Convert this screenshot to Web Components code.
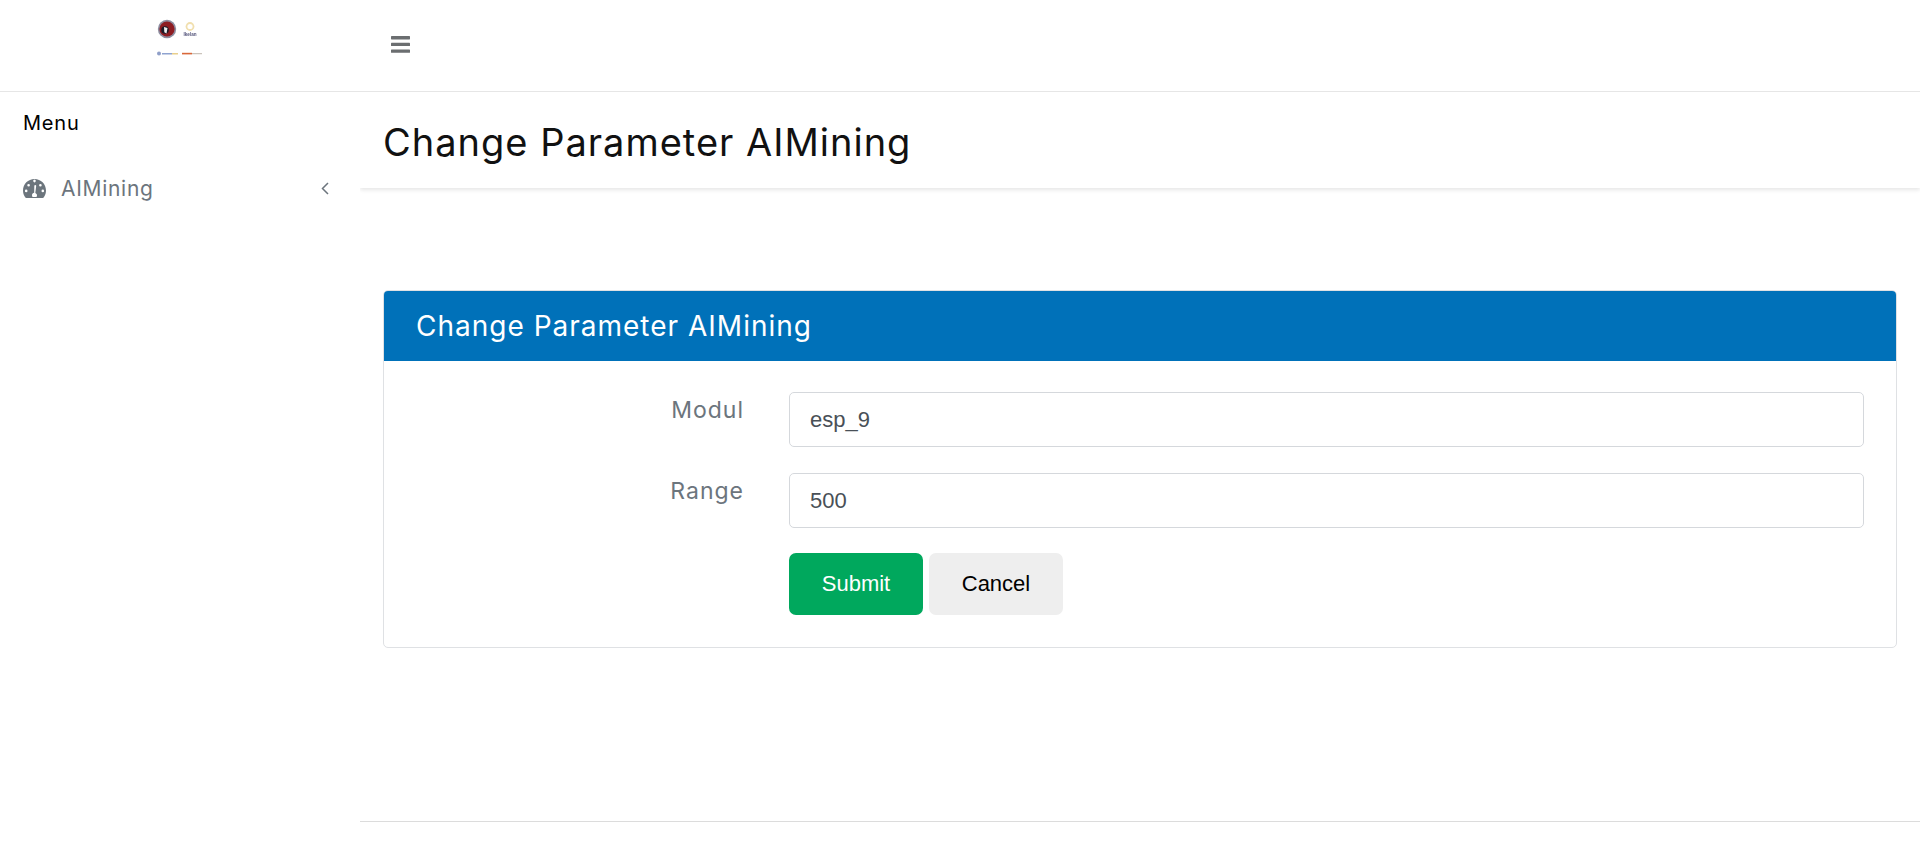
<!DOCTYPE html>
<html><head><meta charset="utf-8"><style>
html,body{margin:0;height:100%;background:#fff;overflow:hidden}
body{font-family:"Inter","Liberation Sans",sans-serif}
</style></head><body>
<app-shell>
  <top-bar slot="top"></top-bar>
  <side-menu slot="side"></side-menu>
  <page-title slot="main">Change Parameter AIMining</page-title>
  <form-card slot="main" heading="Change Parameter AIMining"></form-card>
  <page-foot slot="main"></page-foot>
</app-shell>
<script>
function def(name, html){
  customElements.define(name, class extends HTMLElement{
    connectedCallback(){
      if(this.shadowRoot) return;
      const r=this.attachShadow({mode:'open'});
      r.innerHTML = typeof html==='function'?html(this):html;
    }
  });
}
const POP='"Inter","Liberation Sans",sans-serif';
def('app-shell',`<style>
:host{display:block;height:846px}
.g{display:grid;grid-template-columns:360px 1fr;grid-template-rows:92px 1fr;height:846px}
.t{grid-column:1/3}
.m{display:flex;flex-direction:column;min-width:0}
</style><div class="g"><div class="t"><slot name="top"></slot></div><div><slot name="side"></slot></div><div class="m"><slot name="main"></slot></div></div>`);

def('top-bar',`<style>
:host{display:flex;height:92px;box-sizing:border-box;border-bottom:1px solid #e6e6e6;align-items:flex-start}
.logo{width:360px;box-sizing:border-box;padding:19px 0 0 155px}
.logo svg{display:block}
.b{margin:36px 0 0 31px;display:block}
text{font:700 4.6px "Liberation Sans",sans-serif;fill:#54547a}
</style><div class="logo"><svg width="50" height="40" viewBox="0 0 50 40" style="filter:blur(.3px)">
<circle cx="12" cy="10" r="9.2" fill="#8d8da0"/><circle cx="12" cy="10" r="7.6" fill="#8e1c22"/>
<circle cx="10" cy="11" r="3.800" fill="#1a1a28"/><path d="M9 8l3.500 1-1 5.500-2.200-1.200z" fill="#eee"/>
<circle cx="35" cy="7.500" r="4.400" fill="#f1dfae"/><circle cx="35" cy="7.500" r="2.600" fill="#fff"/>
<text x="35" y="16.500" text-anchor="middle">Ikelan</text>
<circle cx="4" cy="34.500" r="2" fill="#8f9fc8"/><rect x="7" y="34" width="10" height="1.500" fill="#8fa3d0"/><rect x="17" y="34" width="6" height="1.500" fill="#e9cf8c"/>
<rect x="27" y="33.800" width="10" height="1.600" fill="#d9683a"/><rect x="37" y="34.200" width="10" height="1" fill="#bfb6ac"/>
</svg></div>
<svg class="b" width="19" height="17" viewBox="0 0 19 17"><g fill="#6b6e70"><rect x="0" y="0" width="19" height="3.400" rx=".6"/><rect x="0" y="6.700" width="19" height="3.400" rx=".6"/><rect x="0" y="13.400" width="19" height="3.400" rx=".6"/></g></svg>`);

def('side-menu',`<style>
:host{display:block;font-family:${POP}}
.h{color:#000;font-size:20px;padding:19px 23px 0;line-height:24px;height:24px;letter-spacing:.8px}
.i{display:flex;align-items:center;margin-top:41px;padding:0 31px 0 23px;height:24px;color:#6c757d;font-size:21px;letter-spacing:.7px}
svg{display:block}
.n{margin-left:15px;flex:1}
</style><div class="h">Menu</div>
<div class="i"><svg width="23" height="19" viewBox="0 0 23 19"><path fill="#6c757d" fill-rule="evenodd" d="M11.500 0C5.100 0 0 5.100 0 11.500c0 2.400.7 4.700 2 6.500.3.500.8 1 1.400 1h16.200c.6 0 1.100-.5 1.400-1 1.300-1.800 2-4.100 2-6.500C23 5.100 17.900 0 11.500 0zm-1 2.800a1.300 1.300 0 1 1 2 0 1.300 1.300 0 0 1-2 0zM5.600 5a1.300 1.300 0 1 1 0 2.600 1.300 1.300 0 0 1 0-2.600zm11.800 0a1.300 1.300 0 1 1 0 2.600 1.300 1.300 0 0 1 0-2.600zM3.200 10.600a1.300 1.300 0 1 1 0 2.600 1.300 1.300 0 0 1 0-2.600zm16.600 0a1.300 1.300 0 1 1 0 2.600 1.300 1.300 0 0 1 0-2.600zM13.200 6.800l-.9 7.100c1 .4 1.700 1.300 1.700 2.400 0 .6-.2 1.200-.6 1.700H9.600c-.4-.5-.6-1.100-.6-1.700 0-1.300 1-2.400 2.200-2.500l.1-7.100a1 1 0 0 1 1.900.1z"/></svg>
<span class="n">AIMining</span>
<svg width="8" height="13" viewBox="0 0 8 13"><path d="M7 1L1.500 6.500 7 12" fill="none" stroke="#6c757d" stroke-width="1.500"/></svg></div>`);

def('page-title',`<style>
:host{display:block;height:96px;box-sizing:border-box;padding:0 23px;box-shadow:0 2px 4px rgba(0,0,0,.1);clip-path:inset(0 0 -10px 0);font-family:${POP};font-size:38px;letter-spacing:1px;color:#111;line-height:100px;white-space:nowrap}
</style><slot></slot>`);

def('form-field',el=>`<style>
:host{display:grid;grid-template-columns:360px 1075px;column-gap:45px;align-items:start;height:55px}
label{text-align:right;font-family:${POP};font-size:23px;letter-spacing:1px;color:#6c757d;line-height:32px;padding-top:2px}
.v{box-sizing:border-box;height:55px;border:1px solid #d5d8dc;border-radius:5px;padding:0 20px;display:flex;align-items:center;font:22px "Liberation Sans",sans-serif;color:#495057;background:#fff}
</style><label>${el.getAttribute('label')}</label><div class="v">${el.getAttribute('value')}</div>`);

def('act-btn',el=>`<style>
:host{display:inline-flex;box-sizing:border-box;width:134px;height:62px;align-items:center;justify-content:center;border-radius:7px;font:22px "Liberation Sans",sans-serif;background:${el.getAttribute('bg')};color:${el.getAttribute('fg')}}
</style><slot></slot>`);

def('form-card',el=>`<style>
:host{display:block;box-sizing:border-box;height:358px;margin:102px 23px 0 23px;border:1px solid #dfe1e4;border-radius:5px;overflow:hidden;background:#fff}
.h{height:70px;background:#0071b9;color:#fff;font-family:${POP};font-size:28px;letter-spacing:1px;line-height:70px;padding-left:32px;white-space:nowrap}
.b{padding:31px 32px 0 0;display:flex;flex-direction:column;gap:26px}
.a{display:flex;gap:6px;margin:-1px 0 0 405px}
</style><div class="h">${el.getAttribute('heading')}</div>
<div class="b"><form-field label="Modul" value="esp_9"></form-field><form-field label="Range" value="500"></form-field>
<div class="a"><act-btn bg="#00a85d" fg="#fff">Submit</act-btn><act-btn bg="#eeeeee" fg="#000">Cancel</act-btn></div></div>`);

def('page-foot',`<style>
:host{display:block;box-sizing:border-box;height:1px;margin-top:173px;border-top:1px solid #dcdcdc}
</style>`);
</script>
</body></html>
